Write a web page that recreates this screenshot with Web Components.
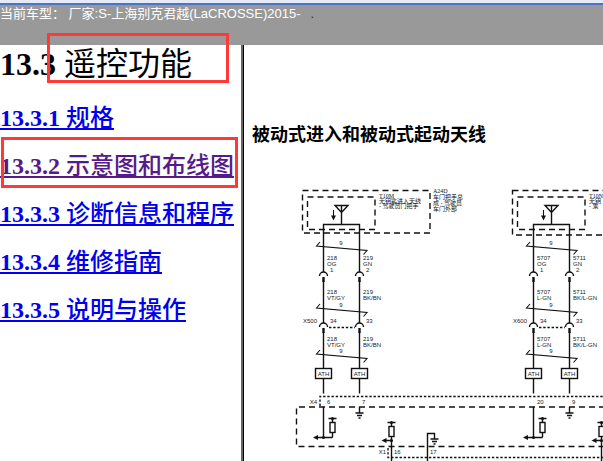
<!DOCTYPE html>
<html lang="zh-CN">
<head>
<meta charset="utf-8">
<title>遥控功能</title>
<style>
  body {
    margin: 0;
    background: white;
    overflow: hidden;
  }
</style>
</head>
<body>
<manual-page></manual-page>

<template id="manual-page">
  <style>
    :host {
      display: flex;
      flex-direction: column;
      min-height: 100vh;
      font-family: "Liberation Serif", "Noto Sans CJK SC", serif;
    }

    .frames {
      display: flex;
      flex: 1;
    }

    .cjk {
      font-weight: 400;
    }
  </style>
  <vehicle-bar>当前车型： 厂家:S-上海别克君越(LaCROSSE)2015-</vehicle-bar>
  <div class="frames">
    <manual-outline>
      <span slot="title">13.3 <span class="cjk">遥控功能</span></span>
      <outline-link href="#1" number="13.3.1">规格</outline-link>
      <outline-link href="#2" number="13.3.2" class="seen" marked>示意图和布线图</outline-link>
      <outline-link href="#3" number="13.3.3">诊断信息和程序</outline-link>
      <outline-link href="#4" number="13.3.4">维修指南</outline-link>
      <outline-link href="#5" number="13.3.5">说明与操作</outline-link>
    </manual-outline>
    <manual-article>
      <span slot="title">被动式进入和被动式起动天线</span>
      <wiring-diagram></wiring-diagram>
    </manual-article>
  </div>
</template>

<template id="vehicle-bar">
  <style>
    :host {
      display: block;
      background: #999;
      color: white;
      font: 13px/16px "Liberation Sans", "Noto Sans CJK SC", sans-serif;
      white-space: nowrap;
    }

    .edge {
      height: 6px;
      background: linear-gradient(#e4eaf6 0 3px, #4a74c8 3px 5px, #8c98b4 5px);
    }

    .text {
      display: flex;
      gap: 10px;
      height: 39px;
    }

    .dot {
      color: #333;
    }
  </style>
  <div class="edge"></div>
  <div class="text"><slot></slot><span class="dot">.</span></div>
</template>

<template id="manual-outline">
  <style>
    :host {
      display: block;
      flex: 0 0 241px;
      white-space: nowrap;
    }

    nav {
      display: flex;
      flex-direction: column;
      gap: 24px;
      padding-top: 1px;
    }

    h1 {
      position: relative;
      margin: 0;
      font-size: 32px;
      line-height: 36px;
    }

    h1::after {
      content: "";
      position: absolute;
      top: -13px;
      left: 47px;
      box-sizing: border-box;
      width: 182px;
      height: 50px;
      border: 3px solid #ff3838;
    }
  </style>
  <nav>
    <h1><slot name="title"></slot></h1>
    <slot></slot>
  </nav>
</template>

<template id="outline-link">
  <style>
    :host {
      display: block;
      position: relative;
      font-size: 24px;
      font-weight: 700;
      line-height: 24px;
    }

    a {
      color: #0000ee;
      text-decoration: underline 2px;
      text-underline-offset: 2px;
      text-decoration-skip-ink: none;
    }

    :host(.seen) a {
      color: #551a8b;
    }

    .name {
      font-weight: 500;
    }

    :host([marked])::after {
      content: "";
      position: absolute;
      top: -17px;
      left: 1px;
      box-sizing: border-box;
      width: 237px;
      height: 51px;
      border: 3px solid #ff3838;
      pointer-events: none;
    }
  </style>
  <a><span class="number"></span> <span class="name"><slot></slot></span></a>
</template>

<template id="manual-article">
  <style>
    :host {
      display: block;
      flex: 1;
      min-width: 0;
      overflow: hidden;
      border-left: 2px solid #666;
      box-shadow: inset 1px 0 black;
    }

    h2 {
      margin: 0;
      padding: 76px 0 36px 9px;
      font: 700 18px/24px "Noto Sans CJK SC", sans-serif;
      white-space: nowrap;
    }
  </style>
  <h2><slot name="title"></slot></h2>
  <slot></slot>
</template>

<template id="wiring-diagram">
  <style>
    :host {
      display: block;
      height: 280px;
      padding-left: 52px;
      overflow: hidden;
    }

    svg {
      display: block;
      fill: none;
      stroke: #111;
      stroke-width: 1.4;
    }

    text {
      fill: #222;
      stroke: none;
      font: 6px "Liberation Sans", sans-serif;
    }

    .note {
      fill: #111;
      font: 6px "Liberation Serif", "Noto Sans CJK SC", serif;
    }

    .thin { stroke-width: 1.1; }
    .plug { stroke-width: 2.4; }
    .dash { stroke-dasharray: 6 4; }
    .dot { stroke-dasharray: 2.4 1.8; }
    .solid { fill: #111; stroke: none; }
  </style>
  <svg width="420" height="280" viewBox="295 181 420 280" role="img" aria-label="天线示意图"></svg>
</template>

<script>
const label = (x, y, text, anchor = 'start') =>
  `<text x="${x}" y="${y}" text-anchor="${anchor}">${text}</text>`;

const note = (x, y, lines, step) => lines.map((line, i) =>
  `<text class="note" x="${x}" y="${y + i * step}">${line}</text>`).join('');

// twisted pair marker with a hook on each end
const twist = y => `
  <path class="thin" d="M320 ${y - 4}L316.500 ${y}L367 ${y + 4.500}L363.500 ${y + 8.500}"/>
  ${label(341, y - 1, '9', 'middle')}`;

// socket arc above the pin of a connector
const connector = (x, y) => `
  <path d="M${x - 4} ${y + 4}a4 4 0 0 1 8 0"/>
  <path class="plug" d="M${x} ${y + 5}v5"/>`;

const ground = (x, y) => `
  <path d="M${x - 4} ${y}h8M${x - 2.500} ${y + 2.500}h5M${x - 1} ${y + 5}h2"/>`;

const resistor = (x, y) => `
  <path d="M${x - 4} ${y}h8M${x} ${y}v4M${x} ${y + 14}v5"/>
  <rect x="${x - 2.500}" y="${y + 4}" width="5" height="10"/>
  <circle class="solid" cx="${x}" cy="${y}" r="1.500"/>`;

const arrow = (x, y) => `
  <path class="solid" d="M${x} ${y}l5 -2.500v5z"/>`;

const antenna = (shift, c) => `
  <g transform="translate(${shift})">
    <path class="dash" d="M302.500 190.500H${c.right}V${c.bottom}H302.500z"/>
    <path class="dash" d="M307.500 197H375V229.500H307.500z"/>
    <path d="M335 205.500h13l-6.500 7zM341.500 205.500V224.500"/>
    <path class="thin" d="M333.500 210v7"/>
    <path class="solid" d="M331 215.500h5l-2.500 5z"/>
    <path d="M323.500 272V224.500H359.500V272"/>
    ${note(379, 198, c.module, 5)}
    ${twist(246)}
    ${label(327, 260, c.wires[0])}${label(327, 266, 'OG')}
    ${label(363, 260, c.wires[1])}${label(363, 266, 'GN')}
    ${label(330, 272, '1')}${label(366, 272, '2')}
    ${connector(323.5, 272)}${connector(359.5, 272)}
    <path d="M323.500 280V323M359.500 280V323"/>
    ${label(327, 294, c.wires[0])}${label(327, 300, c.colors[0])}
    ${label(363, 294, c.wires[1])}${label(363, 300, c.colors[1])}
    ${twist(308)}
    ${label(317, 323, c.plug, 'end')}${label(330, 323, '34')}${label(366, 323, '33')}
    ${connector(323.5, 323)}${connector(359.5, 323)}
    <path class="dot" d="M329 327.500H355"/>
    <path d="M323.500 332V393.500M359.500 332V393.500"/>
    ${label(327, 341, c.wires[0])}${label(327, 347, c.colors[0])}
    ${label(363, 341, c.wires[1])}${label(363, 347, c.colors[1])}
    ${twist(354)}
    <rect x="315.500" y="368.500" width="16" height="10" style="fill: white"/>
    <rect x="351.500" y="368.500" width="16" height="10" style="fill: white"/>
    ${label(323.5, 376, 'ATH', 'middle')}${label(359.5, 376, 'ATH', 'middle')}
    ${label(327, 404, c.pins[0])}${label(362, 404, c.pins[1])}
    <path d="M323.500 407V437.500H332.500M323.500 437.500H317M359.500 407V413"/>
    <circle class="solid" cx="323.500" cy="437.500" r="1.500"/>
    ${arrow(313, 437.5)}${resistor(332.5, 418.5)}${ground(359.5, 413)}
  </g>`;

// receiver input on the lower connector
const receiver = x => `
  <path d="M${x} 440V461M${x} 440.500h-6"/>
  <circle class="solid" cx="${x}" cy="440.500" r="1.500"/>
  ${resistor(x, 422.5)}${arrow(x - 10, 440.5)}`;

const wiring = `
  ${antenna(0, {
    right: 430, bottom: 233,
    module: ['T10M', '无钥匙进入天线', '- 驾驶员门把手'],
    wires: ['218', '219'], colors: ['VT/GY', 'BK/BN'],
    plug: 'X500', pins: ['6', '7']
  })}
  ${antenna(210, {
    right: 430, bottom: 235,
    module: ['T10N', '无钥', '- 乘'],
    wires: ['5707', '5711'], colors: ['L-GN', 'BK/L-GN'],
    plug: 'X600', pins: ['20', '9']
  })}
  ${note(433, 193, ['A24D', '车门把手总', '成 - 驾驶员', '车门外部'], 6)}
  <path class="dot" d="M320 406V396.500H715"/>
  ${label(317, 404, 'X4', 'end')}
  <path class="dash" d="M715 407H296.500V446.500H715"/>
  ${receiver(391.5)}${receiver(601.5)}
  ${label(386, 454, 'X1', 'end')}${label(394, 454, '16')}${label(430, 454, '17')}
  <path class="dot" d="M388 448V457.500H715"/>
  <path d="M427.500 461V433.500H434.500V439"/>
  ${ground(434.5, 439)}`;

class ManualElement extends HTMLElement {
  constructor() {
    super();
    this.attachShadow({ mode: 'open' });
    const template = document.getElementById(this.localName);
    this.shadowRoot.appendChild(template.content.cloneNode(true));
  }
}

class ManualPage extends ManualElement {}
class VehicleBar extends ManualElement {}
class ManualOutline extends ManualElement {}
class ManualArticle extends ManualElement {}

class OutlineLink extends ManualElement {
  connectedCallback() {
    this.shadowRoot.querySelector('a').href = this.getAttribute('href');
    this.shadowRoot.querySelector('.number').textContent = this.getAttribute('number');
  }
}

class WiringDiagram extends ManualElement {
  connectedCallback() {
    this.shadowRoot.querySelector('svg').innerHTML = wiring;
  }
}

customElements.define('vehicle-bar', VehicleBar);
customElements.define('manual-outline', ManualOutline);
customElements.define('outline-link', OutlineLink);
customElements.define('manual-article', ManualArticle);
customElements.define('wiring-diagram', WiringDiagram);
customElements.define('manual-page', ManualPage);
</script>
</body>
</html>
